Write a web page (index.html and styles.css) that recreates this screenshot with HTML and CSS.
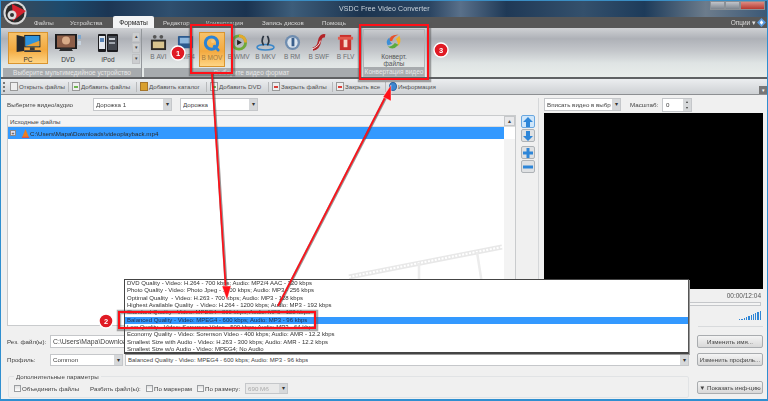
FILE: index.html
```html
<!DOCTYPE html>
<html lang="ru">
<head>
<meta charset="utf-8">
<title>VSDC Free Video Converter</title>
<link rel="stylesheet" href="styles.css">
</head>
<body>
<div class="app">
  <header class="titlebar">
    <span class="title">VSDC Free Video Converter</span>
    <div class="winctl"><i></i><i></i><i class="close"></i></div>
  </header>
  <div class="logo">
    <svg viewBox="0 0 24 24" width="24" height="24"><circle cx="12" cy="12" r="11.5" fill="#d8d8d8"/><circle cx="12" cy="12" r="9.500" fill="#2a2a2a"/><path d="M9 3 23 10 10 20z" fill="#d5232f"/><circle cx="9" cy="14" r="4.500" fill="#ddd"/><circle cx="9" cy="14" r="2" fill="#333"/></svg>
  </div>
  <nav class="tabs">
    <span class="tab w1">Файлы</span><span class="tab w2">Устройства</span><span class="tab active">Форматы</span><span class="tab w3">Редактор</span><span class="tab w4">Конвертация</span><span class="tab w5">Запись дисков</span><span class="tab w6">Помощь</span>
    <span class="options">Опции ▾</span>
    <svg class="helpicon" viewBox="0 0 10 10" width="9" height="9"><path d="M5 0 10 5 5 10 0 5z" fill="#5a9be0"/><path d="M5 2.500 7 5 5 7.500 3 5z" fill="#fff"/></svg>
  </nav>
  <section class="ribbon">
    <div class="group g1">
      <div class="items devices">
        <div class="dev sel"><svg viewBox="0 0 27 20" width="27" height="20"><path d="M1 1 9 3V18L1 19z" fill="#26292e"/><rect x="9" y="1" width="17" height="13" fill="#1d2024"/><rect x="10" y="2" width="15" height="11" fill="#2d93de"/><path d="M10 13 25 7v6z" fill="#e9a23a"/><rect x="15" y="14" width="5" height="3" fill="#3a3a3a"/><path d="M9 17h17l1 2H9z" fill="#33363a"/></svg><span>PC</span></div>
        <div class="dev"><svg viewBox="0 0 28 20" width="28" height="20"><rect x="1" y="1" width="22" height="15" fill="#1c1c1e"/><rect x="3" y="2.500" width="18" height="12" fill="#8d5e48"/><circle cx="12" cy="7.500" r="4" fill="#d8ab88"/><path d="M7 15h10l2 3H5z" fill="#2b2b2d"/><rect x="24" y="2" width="3" height="4" fill="#7fa9d0"/><rect x="24" y="8" width="3" height="4" fill="#c7d3df"/></svg><span>DVD</span></div>
        <div class="dev"><svg viewBox="0 0 22 20" width="22" height="20"><rect x="1" y="1" width="8" height="18" rx="1" fill="#1d1d20"/><rect x="2" y="3" width="6" height="13" fill="#e4e8ee"/><rect x="3" y="5" width="4" height="4" fill="#5a84b5"/><rect x="10" y="1" width="11" height="18" rx="1" fill="#1d1d20"/><rect x="11" y="3" width="9" height="14" fill="#43474f"/><rect x="12" y="5" width="6" height="2" fill="#c9cdd4"/><rect x="12" y="9" width="6" height="2" fill="#9fa5ae"/></svg><span>iPod</span></div>
        <div class="scroller"><b>▴</b><b>▾</b><b>▾</b></div>
      </div>
      <div class="glabel">Выберите мультимедийное устройство</div>
    </div>
    <div class="group g2">
      <div class="items formats">
        <div class="fmt"><svg viewBox="0 0 18 18" width="17" height="17"><rect x="1" y="6" width="16" height="11" fill="#2d2a26"/><rect x="3" y="8" width="12" height="7" fill="#d9c48e"/><circle cx="5" cy="3" r="2" fill="#555"/><circle cx="12" cy="3" r="2" fill="#555"/></svg><span>В AVI</span></div>
        <div class="fmt"><svg viewBox="0 0 18 18" width="17" height="17"><rect x="1" y="2" width="16" height="13" rx="1" fill="#2c5a8f"/><rect x="3" y="4" width="12" height="6" fill="#8fb8de"/></svg><span>В MP4</span></div>
        <div class="fmt sel"><svg viewBox="0 0 18 18" width="19" height="17"><circle cx="9" cy="8.500" r="6.500" fill="none" stroke="#2b83d6" stroke-width="3.200"/><path d="M12 12 16 16" stroke="#2b83d6" stroke-width="3" stroke-linecap="round"/><circle cx="10.500" cy="6.500" r="2" fill="#f2c77c"/></svg><span>В MOV</span></div>
        <div class="fmt"><svg viewBox="0 0 18 18" width="18" height="17"><circle cx="9" cy="9" r="7" fill="none" stroke="#6fa93a" stroke-width="3"/><path d="M9 2a7 7 0 0 1 7 7" fill="none" stroke="#e2a92c" stroke-width="3"/><path d="M7 6 12 9 7 12z" fill="#222"/></svg><span>В WMV</span></div>
        <div class="fmt"><svg viewBox="0 0 20 18" width="19" height="17"><ellipse cx="10" cy="14" rx="9" ry="3" fill="none" stroke="#3a86c8" stroke-width="1.600"/><path d="M8 2Q5 7 8 12M12 2Q15 7 12 12" fill="none" stroke="#2a3440" stroke-width="1.800"/></svg><span>В MKV</span></div>
        <div class="fmt"><svg viewBox="0 0 18 18" width="17" height="17"><circle cx="9" cy="9" r="8" fill="#6f8db0"/><circle cx="9" cy="9" r="5.500" fill="#dbe4ee"/><path d="M8 4h3v9H8z" fill="#3a5f8c"/></svg><span>В RM</span></div>
        <div class="fmt"><svg viewBox="0 0 18 18" width="17" height="17"><path d="M3 16Q9 15 10 8T16 2" fill="none" stroke="#b32327" stroke-width="3.500"/><path d="M2 16Q10 13 11 7" fill="none" stroke="#eee" stroke-width="1"/></svg><span>В SWF</span></div>
        <div class="fmt"><svg viewBox="0 0 18 18" width="17" height="17"><rect x="3" y="1" width="12" height="16" fill="#c9302c"/><rect x="1" y="3" width="16" height="3" fill="#e25b4f"/><rect x="7" y="6" width="4" height="8" fill="#f6d6c8"/></svg><span>В FLV</span></div>
      </div>
      <div class="glabel">Выберите видео формат</div>
    </div>
    <div class="group g3">
      <div class="items convert">
        <svg viewBox="0 0 20 20" width="18" height="18"><path d="M4 9Q6 1 15 2 9 4 8 9z" fill="#e8522a"/><path d="M16 3Q19 10 14 15 15 10 12 7z" fill="#f0b428"/><path d="M15 13Q9 20 3 15 8 15 11 11z" fill="#5cab3c"/><path d="M3 14Q0 9 5 5 5 10 8 12z" fill="#3b8fd8"/></svg>
        <span>Конверт.<br>файлы</span>
      </div>
      <div class="glabel">Конвертация видео</div>
    </div>
  </section>
  <div class="toolbar">
    <span class="grip"></span>
    <span class="tool t1"><i class="ti doc"></i>Открыть файлы</span>
    <span class="tool t2"><i class="ti add"></i>Добавить файлы</span>
    <span class="tool t3"><i class="ti fold"></i>Добавить каталог</span>
    <span class="tool t4"><i class="ti add"></i>Добавить DVD</span>
    <span class="tool t5"><i class="ti cls"></i>Закрыть файлы</span>
    <span class="tool t6"><i class="ti cls"></i>Закрыть все</span>
    <span class="tool t7"><i class="ti inf"></i>Информация</span>
    <span class="grip2">▾</span>
  </div>
  <main class="main">
    <div class="upper">
      <div class="left">
        <div class="selrow">
          <label class="selbl">Выберите видео/аудио</label>
          <div class="combo c1"><span>Дорожка 1</span><b>▾</b></div>
          <div class="combo c2"><span>Дорожка</span><b>▾</b></div>
        </div>
        <div class="list">
          <div class="listhead">Исходные файлы<b class="scrollup">▴</b></div>
          <div class="rowsel"><span class="plus">+</span>
            <svg viewBox="0 0 10 10" width="9" height="9"><path d="M5 0 9 10H1z" fill="#ee7d1e"/><rect x="1" y="8.600" width="8" height="1.400" fill="#c55"/></svg>
            <span>C:\Users\Мара\Downloads\videoplayback.mp4</span></div>
          <div class="listbody">
            <svg class="film" viewBox="0 0 160 40" width="160" height="40"><path d="M5 33Q80 18 158 3" fill="none" stroke="#e8e8e8" stroke-width="5"/><path d="M5 33Q80 18 158 3" fill="none" stroke="#fff" stroke-width="2" stroke-dasharray="2 1.500"/><path d="M75 19V40M133 8 138 40" stroke="#ececec" stroke-width="2.500"/></svg>
          </div>
        </div>
      </div>
      <div class="movebtns">
        <div class="mv"><svg viewBox="0 0 10 10" width="10" height="10"><path d="M5 0 10 5H7v5H3V5H0z" fill="#2e86d8"/></svg></div>
        <div class="mv"><svg viewBox="0 0 10 10" width="10" height="10"><path d="M5 10 10 5H7V0H3v5H0z" fill="#2e86d8"/></svg></div>
        <div class="mv gap"><svg viewBox="0 0 10 10" width="10" height="10"><path d="M3.500 0h3v3.500h3.500v3H6.500V10h-3V6.500H0v-3h3.500z" fill="#2e86d8"/></svg></div>
        <div class="mv"><svg viewBox="0 0 10 10" width="10" height="10"><rect y="3.500" width="10" height="3" fill="#2e86d8"/></svg></div>
      </div>
      <div class="right">
        <div class="viewrow">
          <div class="combo c3"><span>Вписать видео в выбр</span><b>▾</b></div>
          <span class="scalelbl">Масштаб:</span>
          <div class="spin"><span>0</span><b>▴<br>▾</b></div>
        </div>
        <div class="video"></div>
        <div class="time">00:00/12:04</div>
        <div class="slider"></div>
        <div class="volume"><i></i><i></i><i></i><i></i><i></i><i></i><i></i><i></i><i></i><i></i></div>
        <div class="hr"></div>
      </div>
    </div>
    <div class="lower">
      <div class="formrows">
        <div class="frow r1"><label>Рез. файл(ы):</label><div class="input"><span>C:\Users\Мара\Downloads</span></div><button class="btn">Изменить имя...</button></div>
        <div class="frow r2"><label>Профиль:</label><div class="combo c4"><span>Common</span><b>▾</b></div><div class="combo c5"><span>Balanced Quality - Video: MPEG4 - 600 kbps; Audio: MP3 - 96 kbps</span><b>▾</b></div><button class="btn">Изменить профиль...</button></div>
      </div>
      <div class="frow r3">
        <fieldset class="params">
          <legend>Дополнительные параметры</legend>
          <span class="chk"></span><span class="plabel p1">Объединить файлы</span>
          <span class="plabel p2">Разбить файл(ы):</span>
          <span class="chk"></span><span class="plabel p3">По маркерам</span>
          <span class="chk"></span><span class="plabel p4">По размеру:</span>
          <div class="combo c6"><span>690 Мб</span><b>▾</b></div>
        </fieldset>
        <button class="btn info">▼ Показать инф-цию</button>
      </div>
    </div>
  </main>
  <div class="dropdown">
    <div>DVD Quality - Video: H.264 - 700 kbps; Audio: MP2/4 AAC - 320 kbps</div>
    <div>Photo Quality - Video: Photo Jpeg - 1000 kbps; Audio: MP3 - 256 kbps</div>
    <div>Optimal Quality&nbsp; - Video: H.263 - 700 kbps; Audio: MP3 - 128 kbps</div>
    <div>Highest Available Quality&nbsp; - Video: H.264 - 1200 kbps; Audio: MP3 - 192 kbps</div>
    <div>Standard Quality - Video: MPEG4 - 800 kbps; Audio: MP3 - 128 kbps</div>
    <div class="hi">Balanced Quality - Video: MPEG4 - 600 kbps; Audio: MP3 - 96 kbps</div>
    <div>Low Quality - Video: Sorenson Video - 500 kbps; Audio: MP3 - 64 kbps</div>
    <div>Economy Quality - Video: Sorenson Video - 400 kbps; Audio: AMR - 12.2 kbps</div>
    <div>Smallest Size with Audio - Video: H.263 - 300 kbps; Audio: AMR - 12.2 kbps</div>
    <div>Smallest Size w/o Audio - Video: MPEG4; No Audio</div>
  </div>
  <svg class="marks" viewBox="0 0 768 401" width="768" height="401">
    <g fill="none" stroke="#555" stroke-opacity=".5">
      <rect x="191" y="25" width="42" height="49" stroke-width="4.500"/>
      <rect x="360" y="25" width="69" height="55" stroke-width="4.500"/>
      <rect x="119" y="312" width="197" height="17" stroke-width="4.500"/>
    </g>
    <g fill="none" stroke="#ff1018" stroke-width="2">
      <rect x="191" y="25" width="41" height="48"/>
      <rect x="360" y="25" width="68" height="54"/>
      <rect x="119" y="312" width="196" height="16"/>
    </g>
    <g stroke="#4a3a3a" stroke-opacity=".55" stroke-width="3"><path d="M212.500 74 226.500 292"/><path d="M278.500 306 388.500 92"/></g>
    <g stroke="#ff1018" stroke-width="1.700"><path d="M212 74 226 292"/><path d="M278 306 388 92"/></g>
    <g fill="#ff1018" stroke="#fff" stroke-width=".4"><path d="M227 300 222 286 231 286z"/><path d="M391 85 391 101 383 97z"/></g>
    <g class="badges">
      <circle cx="178" cy="53" r="7" fill="#e01a24" stroke="#fff" stroke-width="1.400"/>
      <circle cx="441" cy="50" r="7" fill="#e01a24" stroke="#fff" stroke-width="1.400"/>
      <circle cx="106" cy="321" r="7" fill="#e01a24" stroke="#fff" stroke-width="1.400"/>
      <text x="178" y="56" class="bt">1</text>
      <text x="441" y="53" class="bt">3</text>
      <text x="106" y="324" class="bt">2</text>
    </g>
  </svg>
</div>
</body>
</html>
```
FILE: styles.css
```css
* { box-sizing: border-box; }
html, body { margin: 0; padding: 0; }
body { width: 768px; height: 401px; overflow: hidden; background: #f0f0f0; font-family: "Liberation Sans", Arial, sans-serif; font-size: 6.200px; color: #3c3c3c; }
.app { position: relative; width: 768px; height: 401px; overflow: hidden; filter: blur(.45px); display: flex; flex-direction: column; border-left: 1px solid #2f8fd0; border-right: 1px solid #2f8fd0; border-bottom: 2px solid #2f8fd0; }

.titlebar { height: 17px; flex: none; display: flex; justify-content: flex-end; align-items: flex-start; position: relative; border-top: 1px solid #3a8ec4; background: linear-gradient(90deg, #3e4a58 0, #1d4a6c 8%, #1c3654 14%, #2f4f6e 22%, #1a3350 32%, #3d5d7a 38%, #1c344f 47%, #2b4562 56%, #59708a 60%, #1f3956 66%, #34506c 76%, #1d3b5a 84%, #6c7c8c 92%, #3b5876 100%); }
.title { position: absolute; left: 338px; top: 4px; color: #c9d3dc; font-size: 7px; letter-spacing: .1px; }
.winctl { display: flex; margin-right: 2px; height: 9px; }
.winctl i { width: 15px; background: linear-gradient(#c0c4ca, #7d858e); border: 1px solid #8a9096; }
.winctl .close { width: 25px; background: linear-gradient(#dc8a80, #b63a30); }
.logo { position: absolute; left: 2px; top: 1px; width: 24px; height: 24px; z-index: 2; }

.tabs { height: 11px; flex: none; display: flex; align-items: center; background: #575757; color: #d6d6d6; padding-left: 33px; position: relative; }
.tab { white-space: nowrap; flex: none; }
.tab.w1 { width: 36px; }
.tab.w2 { width: 43px; }
.tab.active { width: 41px; height: 12px; margin-top: -1px; background: #f3f4f5; color: #222; font-size: 6.700px; text-align: center; line-height: 13px; border-radius: 2px 2px 0 0; margin-right: 9px; }
.tab.w3 { width: 43px; }
.tab.w4 { width: 56px; }
.tab.w5 { width: 60px; }
.options { margin-left: auto; margin-right: 11px; font-size: 6.500px; color: #ddd; }
.helpicon { position: absolute; right: 1px; top: 1px; }

.ribbon { height: 51px; flex: none; display: flex; background: linear-gradient(#cfd1d4 0, #aeb1b7 22%, #c3c6ca 46%, #dfe4e4 72%, #e9edeb 100%); border-bottom: 2px solid #5f6163; padding-top: 1px; }
.group { display: flex; flex-direction: column; height: 48px; }
.items { flex: 1; display: flex; min-height: 0; }
.glabel { height: 9px; line-height: 9px; flex: none; background: #a7abae; text-align: center; color: #e8e8e8; font-size: 6.500px; white-space: nowrap; overflow: hidden; }
.g1 { width: 139px; margin-left: 2px; border-right: 1px solid #93979b; }
.g2 { width: 216px; margin-left: 2px; border-right: 1px solid #93979b; }
.g3 { width: 62px; margin-left: 3px; border: 1px solid #b0b4b7; }
.devices { padding: 3px 0 4px 5px; }
.dev { display: flex; flex-direction: column; align-items: center; color: #333; font-size: 6.500px; gap: 3px; padding-top: 1px; }
.dev:nth-child(1) { width: 40px; }
.dev:nth-child(2) { width: 38px; margin-left: 1px; }
.dev:nth-child(3) { width: 28px; margin-left: 7px; }
.sel { background: linear-gradient(#f7c26a, #f3a93f 55%, #ffd584); border: 1px solid #d9952f; }
.scroller { width: 8px; margin-left: 10px; display: flex; flex-direction: column; gap: 1px; }
.scroller b { flex: 1; background: #ccced0; border: 1px solid #c0c2c4; font-size: 5px; line-height: 7px; text-align: center; font-weight: normal; }
.formats { padding: 3px 0 0 1px; }
.fmt { width: 27px; height: 35px; display: flex; flex-direction: column; align-items: center; justify-content: flex-start; gap: 2px; padding-top: 2px; font-size: 6.500px; color: #6b6e72; white-space: nowrap; }
.fmt svg { flex: none; }
.fmt.sel { color: #a67a3a; }
.convert { flex-direction: column; align-items: center; padding-top: 3px; gap: 2px; font-size: 6.500px; color: #555; text-align: center; line-height: 7px; }
.convert svg { flex: none; }

.toolbar { height: 16px; flex: none; display: flex; align-items: center; gap: 0; padding-left: 2px; background: linear-gradient(#eceef0, #ced1d4); border-bottom: 1px solid #8d8f92; color: #505050; white-space: nowrap; position: relative; }
.grip { width: 2px; height: 10px; border-left: 2px dotted #777; margin-right: 5px; }
.tool { display: flex; align-items: center; gap: 1px; border-right: 1px solid #b8babc; margin-right: 3px; height: 10px; }
.tool.t7 { border: 0; }
.ti { display: inline-block; width: 8px; height: 9px; flex: none; background: #eee; border: 1px solid #999; }
.ti.add { background: linear-gradient(#6db54f, #6db54f) center/4px 2px no-repeat #eee; }
.ti.fold { background: #d9a02f; border-color: #a6762c; }
.ti.cls { background: linear-gradient(#d9403a, #d9403a) center/4px 2px no-repeat #eee; }
.ti.inf { background: #3f86d0; border-radius: 50%; border-color: #2c66a5; }
.t1 { width: 59px; } .t2 { width: 65px; } .t3 { width: 67px; } .t4 { width: 59px; } .t5 { width: 61px; } .t6 { width: 50px; }
.grip2 { position: absolute; right: 0; top: 7px; width: 8px; height: 8px; background: #777; color: #fff; font-size: 5px; line-height: 8px; text-align: center; }

.main { flex: 1; display: flex; flex-direction: column; padding: 3px 4px 0 6px; min-height: 0; }
.upper { height: 230px; flex: none; display: flex; }
.left { width: 509px; flex: none; display: flex; flex-direction: column; padding-bottom: 2px; }
.selrow { height: 17px; flex: none; display: flex; align-items: flex-start; }
.selbl { width: 86px; line-height: 13px; white-space: nowrap; }
.combo { height: 13px; display: flex; align-items: stretch; justify-content: space-between; background: #fff; border: 1px solid #c5c7ca; line-height: 11px; padding-left: 2px; white-space: nowrap; overflow: hidden; color: #444; }
.combo span { overflow: hidden; }
.combo b { width: 8px; flex: none; background: #d6d8da; color: #333; font-size: 6px; text-align: center; font-weight: normal; }
.c1 { width: 79px; margin-right: 8px; }
.c2 { width: 78px; }
.list { flex: 1; min-height: 0; display: flex; flex-direction: column; background: #fff; border: 1px solid #c9cbcd; }
.listhead { height: 11px; flex: none; line-height: 11px; padding-left: 2px; background: #f4f4f5; border-bottom: 1px solid #dcdcdc; position: relative; color: #444; }
.scrollup { position: absolute; right: 0; top: 0; width: 11px; height: 10px; background: #e8e8ea; border: 1px solid #c5c7c9; font-size: 6px; font-weight: normal; text-align: center; line-height: 8px; }
.rowsel { height: 12px; flex: none; margin-right: 11px; background: #3399ff; color: #2a2a2a; display: flex; align-items: center; padding-left: 2px; }
.plus { width: 6px; height: 6px; border: 1px solid #888; background: #dde; font-size: 5px; line-height: 4px; text-align: center; margin-right: 5px; }
.listbody { flex: 1; position: relative; overflow: hidden; border-right: 11px solid #f3f3f3; }
.film { position: absolute; right: 0; bottom: 41px; }
.movebtns { flex: none; width: 23px; padding: 17px 0 0 5px; display: flex; flex-direction: column; gap: 1px; border-right: 1px solid #d5d7d9; margin-right: 5px; }
.mv { width: 14px; height: 13px; display: flex; align-items: center; justify-content: center; background: #dfe1e3; border: 1px solid #aeb2b6; border-radius: 2px; }
.mv:first-child { background: #cfe6fa; border-color: #6aa7df; }
.mv.gap { margin-top: 3px; }
.right { flex: 1; min-width: 0; display: flex; flex-direction: column; }
.viewrow { height: 15px; flex: none; display: flex; align-items: flex-start; }
.c3 { width: 77px; margin-right: 9px; }
.scalelbl { width: 32px; line-height: 13px; white-space: nowrap; }
.spin { width: 30px; height: 14px; display: flex; background: #fff; border: 1px solid #c5c7ca; line-height: 11px; padding-left: 3px; justify-content: space-between; }
.spin b { width: 8px; background: #d6d8da; font-size: 4px; line-height: 5.500px; text-align: center; font-weight: normal; }
.video { height: 176px; flex: none; width: 219px; background: #000; }
.time { height: 10px; line-height: 13px; width: 217px; text-align: right; font-size: 6.500px; color: #555; }
.slider { height: 4px; margin-top: 3px; width: 217px; background: #f4f4f4; border: 1px solid #c5c7ca; border-left: 0; flex: none; }
.volume { display: flex; gap: 1px; align-items: flex-end; width: 217px; justify-content: flex-end; height: 11px; margin-top: 3px; flex: none; }
.volume i { width: 1.300px; background: #2f86d6; }
.volume i:nth-child(1) { height: 1px; } .volume i:nth-child(2) { height: 1px; } .volume i:nth-child(3) { height: 2px; } .volume i:nth-child(4) { height: 3px; } .volume i:nth-child(5) { height: 4px; } .volume i:nth-child(6) { height: 5px; } .volume i:nth-child(7) { height: 6px; } .volume i:nth-child(8) { height: 7px; } .volume i:nth-child(9) { height: 8px; } .volume i:nth-child(10) { height: 9px; }
.hr { height: 1px; width: 65px; margin-top: 6px; align-self: flex-end; background: #d8dadc; flex: none; }

.lower { flex: 1; min-height: 0; display: flex; flex-direction: column; }
.formrows { display: flex; flex-direction: column; gap: 5px; padding-top: 7px; }
.frow { display: flex; align-items: center; }
.frow label { width: 43px; flex: none; white-space: nowrap; }
.input { width: 75px; height: 13px; background: #fff; border: 1px solid #c5c7ca; line-height: 11px; padding-left: 2px; white-space: nowrap; overflow: hidden; color: #444; font-size: 6.800px; }
.r1 .btn { margin-left: auto; }
.r2 .combo { height: 12px; line-height: 10px; }
.c4 { width: 73px; margin-right: 2px; }
.c5 { width: 564px; margin-right: auto; font-size: 6px; }
.btn { width: 66px; height: 13px; padding: 0; background: linear-gradient(#f4f4f4, #d8d8d8); border: 1px solid #a9acaf; border-radius: 2px; font: 6.200px "Liberation Sans", Arial, sans-serif; color: #444; white-space: nowrap; }
.r3 { margin-top: 7px; align-items: flex-start; }
.params { width: 681px; height: 25px; margin: 0 0 0 1px; padding: 0 0 0 5px; border: 1px solid #e1e3e5; border-radius: 2px; display: flex; align-items: center; }
.params legend { padding: 0 2px; font-size: 6.200px; line-height: 7px; color: #444; }
.chk { width: 7px; height: 7px; background: linear-gradient(#e0e0e0, #fff); border: 1px solid #9b9ea1; flex: none; margin-right: 1px; }
.plabel { white-space: nowrap; color: #444; }
.p1 { width: 68px; }
.p2 { width: 56px; }
.p3 { width: 43px; }
.p4 { width: 40px; }
.c6 { width: 43px; height: 11px; line-height: 9px; background: #e9e9e9; color: #aaa; }
.info { margin-left: auto; margin-top: 8px; }

.dropdown { position: absolute; left: 123px; top: 279px; width: 565px; height: 75px; background: #fff; border: 1px solid #444; border-bottom-width: 2px; border-right-color: #555; z-index: 3; color: #333; font-size: 6px; line-height: 7.330px; box-shadow: 1px 1px 0 #999; }
.dropdown div { height: 7.330px; padding-left: 2px; white-space: nowrap; }
.dropdown .hi { background: #3399ff; color: #1f2a44; }
.marks { position: absolute; left: -1px; top: 0; z-index: 4; pointer-events: none; }
.bt { fill: #fff; font: bold 7.500px "Liberation Sans", Arial, sans-serif; text-anchor: middle; }
```
